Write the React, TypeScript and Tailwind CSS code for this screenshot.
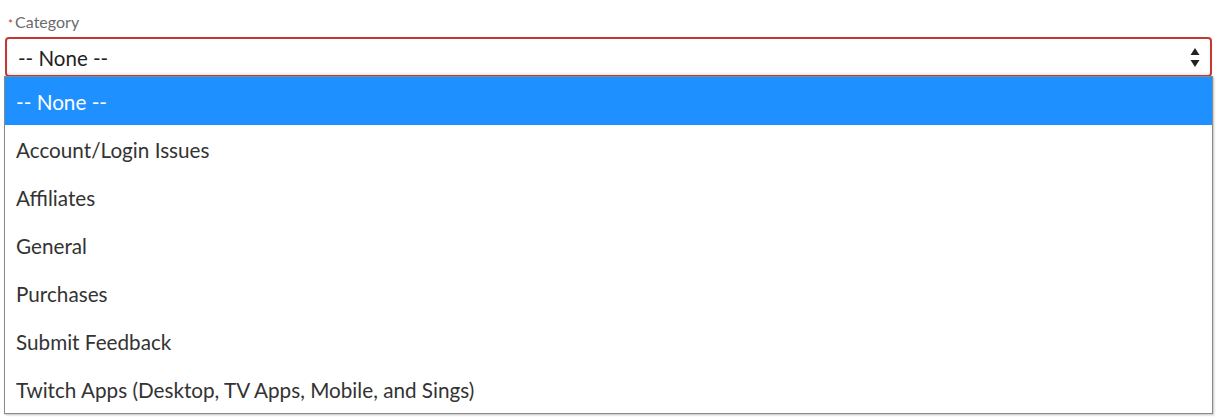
import React from 'react';

const OPTIONS = [
  '-- None --',
  'Account/Login Issues',
  'Affiliates',
  'General',
  'Purchases',
  'Submit Feedback',
  'Twitch Apps (Desktop, TV Apps, Mobile, and Sings)',
];

function SortArrows() {
  return (
    <svg width="10" height="24" viewBox="0 0 10 24" className="text-[#222]">
      <path d="M5 3 L9.5 10 L0.5 10 Z" fill="currentColor" />
      <path d="M0.5 15 L9.5 15 L5 22 Z" fill="currentColor" />
    </svg>
  );
}

export default function App() {
  return (
    <div className="w-[1217px] h-[417px] overflow-hidden bg-white font-['Lato',sans-serif]">
      <div className="h-[37px] pl-[8px] pt-[12px] text-[16px] leading-[20px] text-[#6b6b6b]">
        <span className="text-[#c23934] text-[12px] mr-[2px]">*</span>Category
      </div>
      <div className="ml-[5px] mr-[5px] relative">
        <div className="h-[40px] border-2 border-[#c23934] rounded-[4px] flex items-center justify-between pl-[11px] pr-[10px] text-[20.5px] text-[#222] shadow-[inset_0_-2px_3px_rgba(0,0,0,0.08)]">
          <span className="pt-[2px]">-- None --</span>
          <SortArrows />
        </div>
        <div className="absolute left-[-1px] right-[-1px] top-[39px] bg-white border border-[#8a8a8a] shadow-[1px_1px_2px_rgba(0,0,0,0.25)]">
          {OPTIONS.map((o, i) => (
            <div
              key={o}
              className={
                'h-[48px] flex items-center pl-[11px] pt-[3px] text-[20.7px] ' +
                (i === 0 ? 'bg-[#1e90ff] text-white' : 'text-[#333]')
              }
            >
              {o}
            </div>
          ))}
        </div>
      </div>
    </div>
  );
}
